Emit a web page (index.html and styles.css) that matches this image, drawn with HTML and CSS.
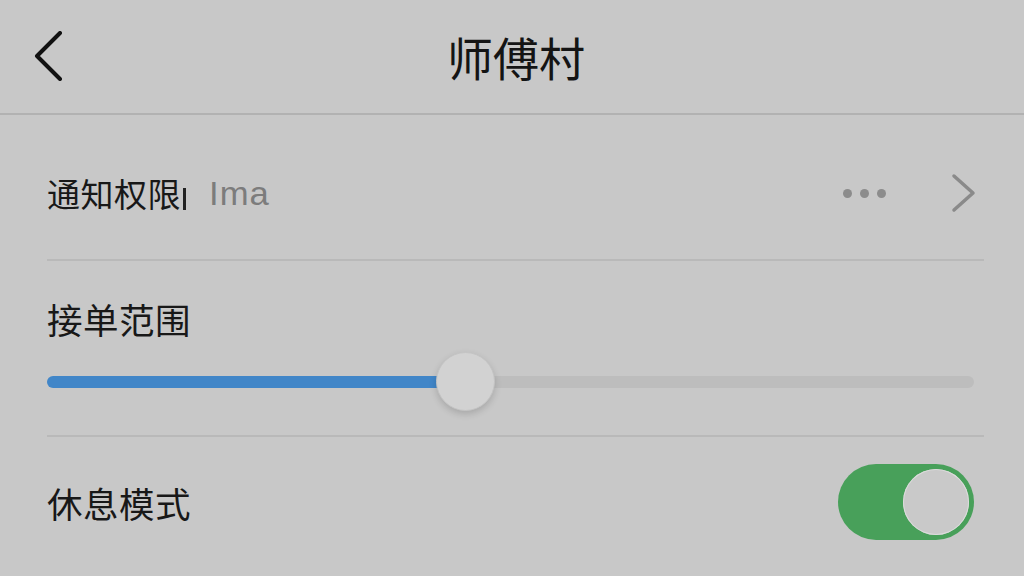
FILE: index.html
```html
<!DOCTYPE html>
<html lang="zh">
<head>
<meta charset="utf-8">
<title>师傅村</title>
<link rel="stylesheet" href="styles.css">
</head>
<body>
<div class="app">
  <header class="topbar">
    <div class="back">
      <svg width="32" height="50" viewBox="0 0 32 50"><path d="M28 2 L5 25 L28 48" fill="none" stroke="#111" stroke-width="4" stroke-linecap="round" stroke-linejoin="round"/></svg>
    </div>
    <h1 class="title">师傅村</h1>
    <div class="spacer"></div>
  </header>
  <main class="list">
    <section class="row row-notify">
      <span class="label">通知权限</span><span class="cursor"></span>
      <span class="hint">Ima</span>
      <span class="dots"><i></i><i></i><i></i></span>
      <svg class="chev" width="26" height="40" viewBox="0 0 26 40"><path d="M3 3 L22 20 L3 37" fill="none" stroke="#8a8a8a" stroke-width="3.5" stroke-linecap="round" stroke-linejoin="round"/></svg>
    </section>
    <section class="row row-range">
      <span class="label">接单范围</span>
      <div class="slider">
        <div class="fill"></div>
        <div class="thumb"></div>
        <div class="rest"></div>
      </div>
    </section>
    <section class="row row-rest">
      <span class="label">休息模式</span>
      <div class="toggle"><div class="knob"></div></div>
    </section>
  </main>
</div>
</body>
</html>
```
FILE: styles.css
```css
html, body {
  margin: 0;
  padding: 0;
}
body {
  background: #c8c8c8;
  font-family: "Noto Sans CJK SC", "Noto Sans", sans-serif;
  color: #161616;
  width: 1024px;
  height: 576px;
  overflow: hidden;
}
.app {
  display: flex;
  flex-direction: column;
  height: 576px;
}
.topbar {
  height: 115px;
  border-bottom: 2px solid #b2b2b2;
  display: grid;
  grid-template-columns: 1fr auto 1fr;
  align-items: center;
  padding-left: 32px;
  box-sizing: border-box;
  flex: none;
}
.back {
  display: flex;
  align-items: center;
  padding-bottom: 2px;
}
.title {
  margin: 0;
  font-size: 46px;
  font-weight: 400;
  color: #141414;
  transform: translateX(-12px);
  line-height: 1;
  padding-bottom: 2px;
}
.list {
  margin-left: 47px;
  width: 937px;
  display: flex;
  flex-direction: column;
}
.row {
  display: flex;
  box-sizing: border-box;
  padding-right: 10px;
}
.row-notify {
  height: 146px;
  align-items: center;
  border-bottom: 2px solid #b9b9b9;
  padding-top: 12px;
}
.label {
  font-size: 33px;
  line-height: 1;
  color: #181818;
  letter-spacing: 0.5px;
}
.cursor {
  width: 3px;
  height: 22px;
  background: #222;
  margin-left: 2px;
  margin-top: 12px;
}
.hint {
  font-family: "Liberation Sans", Arial, sans-serif;
  font-size: 33px;
  color: #7c7c7c;
  margin-left: 23px;
  margin-top: 2px;
  letter-spacing: 1px;
  transform: scaleX(1.05);
  transform-origin: left center;
}
.dots {
  margin-left: auto;
  display: flex;
  gap: 8px;
  margin-right: 65px;
}
.dots i {
  display: block;
  width: 9px;
  height: 9px;
  border-radius: 50%;
  background: #8c8c8c;
}
.chev {
  display: block;
  margin-right: -3px;
}
.row-range {
  height: 176px;
  flex-direction: column;
  border-bottom: 2px solid #b9b9b9;
  padding-top: 40px;
}
.row-range .label {
  font-size: 35.5px;
}
.slider {
  margin-top: 15px;
  height: 60px;
  display: flex;
  align-items: center;
}
.fill {
  width: 400px;
  height: 12px;
  border-radius: 6px 0 0 6px;
  background: #4186c8;
}
.thumb {
  width: 57px;
  height: 57px;
  border-radius: 50%;
  background: #d2d2d2;
  border: 1px solid #c4c4c4;
  box-shadow: 0 3px 7px rgba(0,0,0,0.16);
  margin-left: -11px;
  flex: none;
  position: relative;
  z-index: 1;
}
.rest {
  flex: 1;
  height: 12px;
  border-radius: 0 6px 6px 0;
  background: #bdbdbd;
  margin-left: -6px;
}
.row-rest {
  height: 130px;
  align-items: center;
}
.row-rest .label {
  font-size: 35.5px;
  margin-top: 2px;
}
.toggle {
  margin-left: auto;
  width: 136px;
  height: 76px;
  border-radius: 38px;
  background: #48a05a;
  display: flex;
  align-items: center;
  justify-content: flex-end;
  padding-right: 5px;
  box-sizing: border-box;
}
.knob {
  width: 66px;
  height: 66px;
  border-radius: 50%;
  background: #c9c9c9;
  box-shadow: inset 0 0 0 1px #dcdcdc;
}
```
